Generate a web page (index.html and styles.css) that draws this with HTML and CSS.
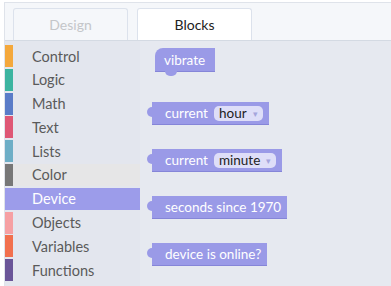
FILE: index.html
```html
<!DOCTYPE html>
<html lang="en">
<head>
  <meta charset="UTF-8" />
  <title>Blocks Editor</title>
  <link rel="stylesheet" href="styles.css">
</head>
<body>
  <div class="editor">
    <div class="tabs">
      <div class="tab">Design</div>
      <div class="tab active">Blocks</div>
    </div>

    <div class="main">
      <ul class="toolbox">
        <li><span class="bar control"></span>Control</li>
        <li><span class="bar logic"></span>Logic</li>
        <li><span class="bar math"></span>Math</li>
        <li><span class="bar text"></span>Text</li>
        <li><span class="bar lists"></span>Lists</li>
        <li class="hover"><span class="bar color"></span>Color</li>
        <li class="selected"><span class="bar device"></span>Device</li>
        <li><span class="bar objects"></span>Objects</li>
        <li><span class="bar variables"></span>Variables</li>
        <li><span class="bar functions"></span>Functions</li>
      </ul>

      <div class="flyout">
        <div class="block statement">vibrate</div>
        <div class="block value">current <span class="field">hour <i>▾</i></span></div>
        <div class="block value">current <span class="field">minute <i>▾</i></span></div>
        <div class="block value">seconds since 1970</div>
        <div class="block value">device is online?</div>
      </div>
    </div>
  </div>
</body>
</html>
```

FILE: styles.css
```css
body {
  margin: 0;
  padding: 2px 0 0 4px;
  background: #fff;
  font-family: Lato, 'Liberation Sans', sans-serif;
  height: 286px;
  box-sizing: border-box;
  overflow: hidden;
}

.editor {
  border-top: 1px solid #dfe3ea;
  border-left: 1px solid #dfe3ea;
  height: 100%;
  display: flex;
  flex-direction: column;
}

.tabs {
  display: flex;
  gap: 9px;
  padding: 5px 0 0 8px;
  height: 32px;
  background: #f5f7fa;
  border-bottom: 1px solid #d4dae3;
}

.tab {
  width: 113px;
  border: 1px solid #dce2ec;
  border-bottom: none;
  border-radius: 3px 3px 0 0;
  background: #f5f7fa;
  color: #c4c6c9;
  font-size: 14px;
  display: flex;
  align-items: center;
  justify-content: center;
}

.tab.active {
  background: #fff;
  color: #222;
}

.main {
  flex: 1;
  display: flex;
  background: #e6e9f0;
}

.toolbox {
  list-style: none;
  margin: 0;
  padding: 4px 0 0 0;
  width: 135px;
  display: flex;
  flex-direction: column;
  gap: 1.8px;
  background: #e3e6ee;
}

.toolbox li {
  height: 22px;
  display: flex;
  align-items: center;
  font-size: 14.5px;
  color: #5a5a5a;
}

.toolbox li.hover {
  background: #e6e6e7;
}

.toolbox li.selected {
  background: #9c9cea;
  color: #fff;
}

.bar {
  width: 8px;
  height: 100%;
  margin-right: 19px;
}

.control { background: #f4a83c; }
.logic { background: #3cb4a0; }
.math { background: #5a7cc8; }
.text { background: #df5775; }
.lists { background: #6eaec6; }
.color { background: #777; }
.device { background: #9c9cea; }
.objects { background: #f6a0a3; }
.variables { background: #f2704e; }
.functions { background: #6a5598; }

.flyout {
  flex: 1;
  padding: 7px 0 0 12px;
  display: flex;
  flex-direction: column;
  align-items: flex-start;
  gap: 24px;
}

.block {
  position: relative;
  height: 23px;
  background: #9a9ae7;
  border-bottom: 1px solid #8585d8;
  color: #fff;
  font-size: 13.5px;
  display: flex;
  align-items: center;
  padding: 0 6px 0 13px;
  box-sizing: border-box;
}

.block.statement {
  margin: 0 0 6px 3px;
  height: 24px;
  padding: 0 10px 0 9px;
  border-radius: 8px 0 0 0;
}

.block.statement::after {
  content: "";
  position: absolute;
  left: 10px;
  bottom: -5px;
  width: 12px;
  height: 5px;
  background: #9a9ae7;
  border-radius: 0 0 5px 5px;
}

.block.value::before {
  content: "";
  position: absolute;
  left: -5px;
  top: 5px;
  width: 6px;
  height: 10px;
  background: #9a9ae7;
  border-radius: 5px 0 0 5px;
}

.field {
  margin-left: 6px;
  background: #dedef8;
  color: #222;
  border-radius: 5px;
  height: 15px;
  display: flex;
  align-items: center;
  padding: 0 5px;
  gap: 6px;
}

.field i {
  font-style: normal;
  font-size: 9px;
  color: #a5a5dc;
}
```
